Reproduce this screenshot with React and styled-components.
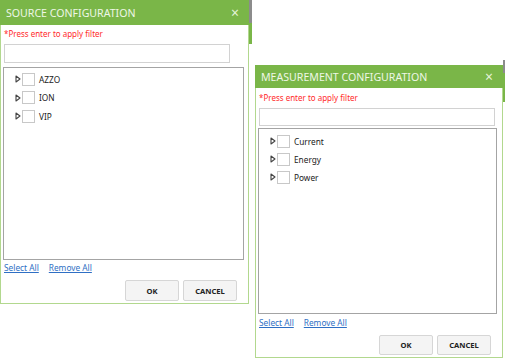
import React from 'react'
import styled, { createGlobalStyle } from 'styled-components'

const GlobalStyle = createGlobalStyle`
  html, body {
    margin: 0;
    padding: 0;
    background: #ffffff;
  }
  body {
    font-family: "Noto Sans", "Open Sans", sans-serif;
  }
`

const Desk = styled.div`
  position: relative;
  width: 505px;
  height: 360px;
  overflow: hidden;
  background: #ffffff;
`

// pieces of the page that sits behind the two dialogs
const Backdrop = styled.div`
  position: absolute;
  left: ${(p) => p.left}px;
  top: ${(p) => p.top}px;
  width: ${(p) => p.width}px;
  height: ${(p) => p.height}px;
  display: flex;
  flex-direction: column;
  background: #ffffff;
`

const BackHeader = styled.div`
  height: ${(p) => p.h}px;
  background: #8c8c8c;
`

const BackBar = styled.div`
  height: ${(p) => p.h}px;
  background: #7ab648;
`

const Window = styled.div`
  position: absolute;
  left: ${(p) => p.left}px;
  top: ${(p) => p.top}px;
  width: ${(p) => p.width}px;
  height: ${(p) => p.height}px;
  box-sizing: border-box;
  display: flex;
  flex-direction: column;
  background: #ffffff;
  border: 1px solid #b2d88e;
  border-top: none;
`

const TitleBar = styled.div`
  height: ${(p) => p.h}px;
  margin: 0 -1px;
  padding: 0 10px 0 6px;
  display: flex;
  align-items: center;
  justify-content: space-between;
  background: #7ab648;
  color: #eef7e6;
  font-size: 10.6px;
`

const Close = styled.span`
  font-size: 14px;
  line-height: 1;
  color: #e6f3da;
`

const Body = styled.div`
  flex: 1;
  display: flex;
  flex-direction: column;
  padding: 0 3px 0 2px;
`

const Hint = styled.div`
  margin: ${(p) => p.mt}px 0 0 1px;
  line-height: 14px;
  font-size: 8px;
  color: #ff2a2a;
`

const Filter = styled.input`
  box-sizing: border-box;
  width: ${(p) => p.w}px;
  height: ${(p) => p.h}px;
  margin: ${(p) => p.mt}px 0 0 1px;
  border: 1px solid #d2d2d2;
  outline: none;
  background: #ffffff;
`

const TreeBox = styled.div`
  box-sizing: border-box;
  width: ${(p) => p.w}px;
  height: ${(p) => p.h}px;
  margin-top: ${(p) => p.mt}px;
  padding-top: ${(p) => p.pt}px;
  border: 1px solid #a4a4a4;
  display: flex;
  flex-direction: column;
`

const Node = styled.div`
  height: ${(p) => p.h}px;
  display: flex;
  align-items: center;
  padding-left: 11px;
  font-size: 8.3px;
  color: #222222;
`

const Check = styled.span`
  box-sizing: border-box;
  width: 13px;
  height: 13px;
  margin: 0 4px 0 1px;
  border: 1px solid #c8c8c8;
  background: #ffffff;
`

const Links = styled.div`
  display: flex;
  gap: 10px;
  margin: ${(p) => p.mt}px 0 0 1px;
  line-height: 12px;
  font-size: 8.3px;
`

const Link = styled.a`
  color: #2f6fc4;
  text-decoration: underline;
  cursor: pointer;
`

const Buttons = styled.div`
  display: flex;
  justify-content: flex-end;
  gap: 4px;
  margin-top: ${(p) => p.mt}px;
  padding-right: 8px;
`

const Button = styled.button`
  box-sizing: border-box;
  width: 54px;
  height: ${(p) => p.h}px;
  padding: 0;
  border: 1px solid #d6d6d6;
  border-radius: 2px;
  background: #f4f4f4;
  font-family: "Noto Sans", "Open Sans", sans-serif;
  font-size: 7.6px;
  font-weight: 700;
  color: #222222;
`

const Arrow = () => (
  <svg width="6" height="8" viewBox="0 0 6 8">
    <polygon points="1,1 5,4 1,7" fill="#ffffff" stroke="#444444" strokeWidth="1.1" strokeLinejoin="round" />
  </svg>
)

const ConfigDialog = ({ title, items, box }) => (
  <Window left={box.left} top={box.top} width={box.width} height={box.height}>
    <TitleBar h={box.titleH}>
      <span>{title}</span>
      <Close>×</Close>
    </TitleBar>
    <Body>
      <Hint mt={box.hintMt}>*Press enter to apply filter</Hint>
      <Filter w={box.inputW} h={box.inputH} mt={box.inputMt} />
      <TreeBox w={box.treeW} h={box.treeH} mt={box.treeMt} pt={box.treePt}>
        {items.map((item) => (
          <Node key={item} h={box.rowH}>
            <Arrow />
            <Check />
            <span>{item}</span>
          </Node>
        ))}
      </TreeBox>
      <Links mt={box.linksMt}>
        <Link>Select All</Link>
        <Link>Remove All</Link>
      </Links>
      <Buttons mt={box.btnMt}>
        <Button h={box.btnH}>OK</Button>
        <Button h={box.btnH}>CANCEL</Button>
      </Buttons>
    </Body>
  </Window>
)

const sourceBox = {
  left: 0, top: 0, width: 249, height: 304, titleH: 25,
  hintMt: 2, inputW: 226, inputH: 19, inputMt: 3,
  treeW: 241, treeH: 193, treeMt: 4, treePt: 2, rowH: 18.5,
  linksMt: 2, btnMt: 6, btnH: 21,
}

const measureBox = {
  left: 255, top: 65, width: 248, height: 293, titleH: 23,
  hintMt: 3, inputW: 236, inputH: 18, inputMt: 3,
  treeW: 239, treeH: 186, treeMt: 2, treePt: 3, rowH: 18,
  linksMt: 3, btnMt: 6, btnH: 20,
}

const App = () => {
  return (
    <Desk>
      <GlobalStyle />
      <Backdrop left={248} top={0} width={4} height={360}>
        <BackHeader h={23} />
        <BackBar h={21} />
      </Backdrop>
      <Backdrop left={503} top={60} width={2} height={300}>
        <BackHeader h={13} />
        <BackBar h={29} />
      </Backdrop>
      <ConfigDialog title="SOURCE CONFIGURATION" items={['AZZO', 'ION', 'VIP']} box={sourceBox} />
      <ConfigDialog title="MEASUREMENT CONFIGURATION" items={['Current', 'Energy', 'Power']} box={measureBox} />
    </Desk>
  )
}

export default App
